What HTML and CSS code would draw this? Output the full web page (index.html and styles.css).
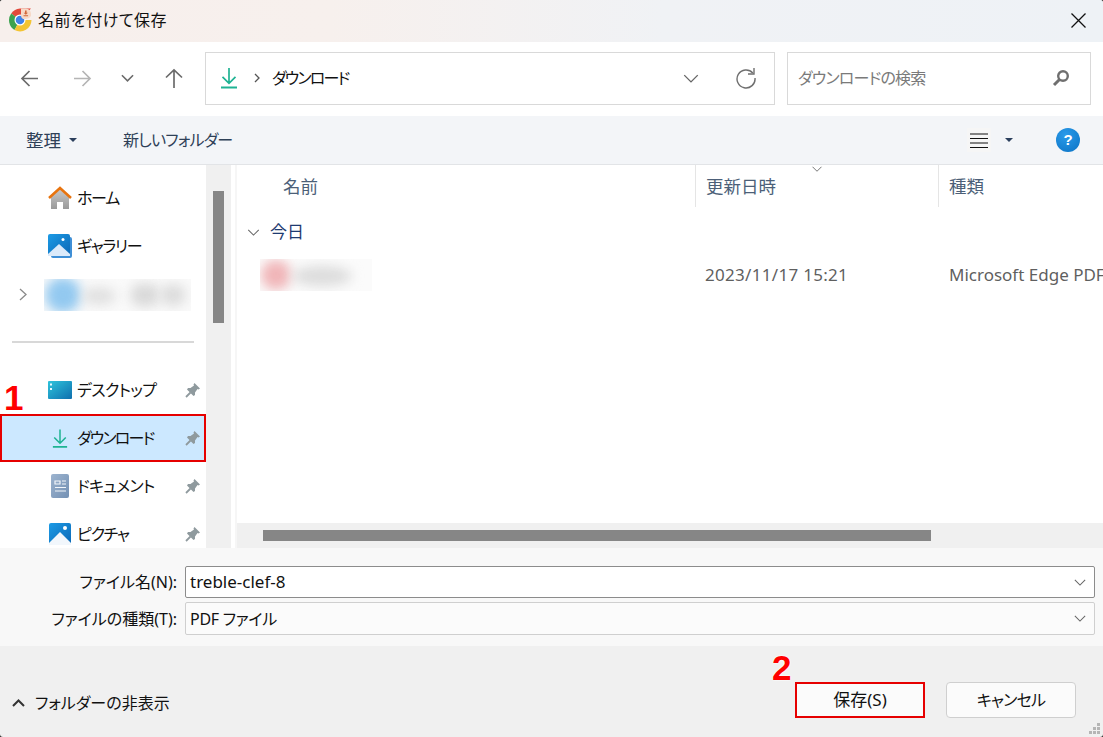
FILE: index.html
```html
<!DOCTYPE html>
<html lang="ja">
<head>
  <meta charset="utf-8">
  <title>名前を付けて保存</title>
  <link rel="stylesheet" href="styles.css">
</head>
<body>
  <svg class="defs" width="0" height="0">
    <defs>
      <linearGradient id="sky" x1="0" y1="0" x2="1" y2="1"><stop offset="0" stop-color="#1c9be6"/><stop offset="1" stop-color="#0b67b5"/></linearGradient>
      <linearGradient id="wall" x1="0" y1="0" x2="0" y2="1"><stop offset="0" stop-color="#c9c9c9"/><stop offset="1" stop-color="#9a9a9a"/></linearGradient>
      <linearGradient id="desk" x1="0" y1="0" x2="1" y2="1"><stop offset="0" stop-color="#2ec4dc"/><stop offset="1" stop-color="#0f6fae"/></linearGradient>
      <linearGradient id="doc" x1="0" y1="0" x2="1" y2="1"><stop offset="0" stop-color="#9db4cf"/><stop offset="1" stop-color="#7390b3"/></linearGradient>
      <symbol id="pin" viewBox="0 0 16 16"><path d="M9.500 1 15 6.500 13.500 7.500 12.500 7 10 10.500V13L8.500 14 2 7.500 3 6H5.500L9 3.500 8.500 2.500z" fill="#8f9a9e"/><path d="M5.500 10.500 1 15" stroke="#8f9a9e" stroke-width="1.800"/></symbol>
      <symbol id="down" viewBox="0 0 18 22"><path d="M9 1v15M2.500 9.800 9 16.300l6.500-6.500" fill="none" stroke="#1fb393" stroke-width="1.700"/><path d="M1 20.500h16" stroke="#1fb393" stroke-width="2"/></symbol>
      <symbol id="chev" viewBox="0 0 14 8"><path d="M1 1l6 6 6-6" fill="none" stroke="#666" stroke-width="1.200"/></symbol>
      <symbol id="caret" viewBox="0 0 8 4"><path d="M0 0h8L4 4z" fill="#2b3f5c"/></symbol>
    </defs>
  </svg>

  <div class="dialog">
    <header class="titlebar">
      <svg class="app-icon" width="24" height="24" viewBox="0 0 24 24">
        <path d="M12 12 3.200 5.500A11.500 11.500 0 0 1 12 .5h11z" fill="#e2493b"/>
        <path d="M12 12 6.500 22A11.500 11.500 0 0 1 3.200 5.500z" fill="#3ba24f"/>
        <path d="M12 12H23.500A11.500 11.500 0 0 1 6.500 22z" fill="#f3c433"/>
        <circle cx="12" cy="12" r="5.500" fill="#fff"/>
        <circle cx="12" cy="12" r="4.300" fill="#3f83e8"/>
        <path d="M13 .5h5a6 6 0 0 1 5 5V8a6 6 0 0 1-5 3h-3a5 5 0 0 1-2-3z" fill="#f6d9c8"/>
        <path d="M17 2.500h1.600v2.200h1.400l-2.200 2-2.200-2H17zM15.500 7.300h4.600v1h-4.600z" fill="#d2683a"/>
      </svg>
      <span class="title">名前を付けて保存</span>
      <svg class="close" width="15" height="15" viewBox="0 0 15 15"><path d="M.5.500l14 14M14.500.500l-14 14" stroke="#111" stroke-width="1.300"/></svg>
    </header>

    <nav class="navbar">
      <div class="nav-btns">
        <svg class="nav-back" width="18" height="17" viewBox="0 0 18 17"><path d="M18 8.500H2M9.500 1 2 8.500 9.500 16" fill="none" stroke="#6b6b6b" stroke-width="1.700"/></svg>
        <svg class="nav-fwd" width="18" height="17" viewBox="0 0 18 17"><path d="M0 8.500h16M8.500 1 16 8.500 8.500 16" fill="none" stroke="#b5b5b5" stroke-width="1.700"/></svg>
        <svg class="nav-drop" width="13" height="8" viewBox="0 0 14 8"><path d="M1 1l6 6 6-6" fill="none" stroke="#6b6b6b" stroke-width="1.700"/></svg>
        <svg class="nav-up" width="18" height="20" viewBox="0 0 18 20"><path d="M9 20V2M1 9.500 9 2l8 7.500" fill="none" stroke="#6b6b6b" stroke-width="1.700"/></svg>
      </div>
      <div class="address">
        <svg width="18" height="22"><use href="#down"/></svg>
        <svg class="crumb-sep" width="6" height="10" viewBox="0 0 6 10"><path d="M1 1l4 4-4 4" fill="none" stroke="#555" stroke-width="1.300"/></svg>
        <span class="crumb">ダウンロード</span>
        <svg class="addr-chev" width="16" height="9" viewBox="0 0 14 8"><use href="#chev"/></svg>
        <svg class="refresh" width="22" height="22" viewBox="0 0 22 22"><path d="M17.800 6A9 9 0 1 0 20 11" fill="none" stroke="#6f6f6f" stroke-width="1.400"/><path d="M19 1v6h-6" fill="none" stroke="#6f6f6f" stroke-width="1.400"/></svg>
      </div>
      <div class="search">
        <span class="search-text">ダウンロードの検索</span>
        <svg width="18" height="18" viewBox="0 0 18 18"><circle cx="11" cy="7" r="4.800" fill="none" stroke="#6f6f6f" stroke-width="2.400"/><path d="M7.500 10.500 2 16" stroke="#6f6f6f" stroke-width="3"/></svg>
      </div>
    </nav>

    <div class="toolbar">
      <button class="tool"><span class="organize">整理</span><svg class="tool-caret" width="8" height="4"><use href="#caret"/></svg></button>
      <button class="tool new-folder">新しいフォルダー</button>
      <div class="tool-right">
        <span class="view-btn"><svg width="18" height="15" viewBox="0 0 18 15"><path d="M0 1h18M0 5.500h18M0 10h18M0 14.500h18" stroke="#111" stroke-width="1"/></svg></span>
        <svg class="tool-caret view-caret" width="8" height="4"><use href="#caret"/></svg>
        <span class="help">?</span>
      </div>
    </div>

    <main class="main">
      <aside class="sidebar">
        <div class="side-item">
          <svg class="side-ic" width="24" height="24" viewBox="0 0 24 24"><path d="M3 11 12 3l9 8v12h-6v-7H9v7H3z" fill="url(#wall)"/><path d="M1 12 12 2l11 10" fill="none" stroke="#e8740f" stroke-width="2.600"/></svg>
          <span class="tight">ホーム</span>
        </div>
        <div class="side-item">
          <svg class="side-ic" width="24" height="24" viewBox="0 0 24 24"><rect x="3" y="3" width="21" height="21" rx="2" fill="#3f8fd6"/><rect width="22" height="22" rx="2" fill="url(#sky)"/><path d="M0 20 11 10l11 10v2H0z" fill="#dbeafa"/><circle cx="15" cy="5.500" r="1.500" fill="#fff"/></svg>
          <span class="tight">ギャラリー</span>
        </div>
        <div class="side-item">
          <svg class="expander" width="8" height="13" viewBox="0 0 8 13"><path d="M1 1l6 5.500L1 12" fill="none" stroke="#8a8a8a" stroke-width="1.300"/></svg>
          <div class="blur-box">
            <i class="blob side-blue"></i><i class="blob side-g1"></i><i class="blob side-g2"></i><i class="blob side-g3"></i>
          </div>
        </div>
        <div class="side-sep"><hr></div>
        <div class="side-item">
          <svg class="side-ic" width="24" height="18" viewBox="0 0 24 18"><rect width="24" height="18" rx="1" fill="url(#desk)"/><path d="M2 2.500h2v2H2zM2 7h2v2H2z" fill="#eafaff"/></svg>
          <span class="snug">デスクトップ</span>
          <svg class="pin" width="16" height="16"><use href="#pin"/></svg>
        </div>
        <div class="side-item selected">
          <svg class="side-ic dl" width="16" height="21" viewBox="0 0 18 22"><use href="#down"/></svg>
          <span class="tighter">ダウンロード</span>
          <svg class="pin" width="16" height="16"><use href="#pin"/></svg>
        </div>
        <div class="side-item">
          <svg class="side-ic" width="24" height="24" viewBox="0 0 24 24"><rect x="3" y="0" width="18" height="24" rx="2" fill="url(#doc)"/><path d="M7 7h5v3H7zM14 7h4M14 10h4M7 13.500h11M7 17h11" stroke="#f2f6fa" stroke-width="1.200" fill="none"/></svg>
          <span class="snug">ドキュメント</span>
          <svg class="pin" width="16" height="16"><use href="#pin"/></svg>
        </div>
        <div class="side-item">
          <svg class="side-ic pic" width="22" height="22" viewBox="0 0 22 22"><rect width="22" height="22" rx="2" fill="url(#sky)"/><path d="M0 20 11 9l11 11v2H0z" fill="#f2f7fc"/><circle cx="16" cy="5" r="2" fill="#fff"/></svg>
          <span class="tight">ピクチャ</span>
          <svg class="pin" width="16" height="16"><use href="#pin"/></svg>
        </div>
      </aside>
      <div class="side-scroll"><div class="side-thumb"></div></div>

      <section class="pane">
        <div class="list">
          <div class="col-heads">
            <div class="col-head first">名前</div>
            <div class="col-head">更新日時<svg class="sort" width="12" height="6" viewBox="0 0 14 8"><use href="#chev"/></svg></div>
            <div class="col-head last">種類</div>
          </div>
          <div class="group">
            <svg width="13" height="7" viewBox="0 0 14 8"><use href="#chev"/></svg>
            <span>今日</span>
          </div>
          <div class="file-row">
            <div class="file-blur"><i class="blob file-red"></i><i class="blob file-g"></i></div>
            <div class="file-date">2023/11/17 15:21</div>
            <div class="file-type">Microsoft Edge PDF</div>
          </div>
        </div>
        <div class="hscroll"><div class="hthumb"></div></div>
      </section>
    </main>

    <form class="form">
      <div class="form-row">
        <label>ファイル名(N):</label>
        <div class="field name"><span>treble-clef-8</span><svg width="12" height="7" viewBox="0 0 14 8"><use href="#chev"/></svg></div>
      </div>
      <div class="form-row">
        <label>ファイルの種類(T):</label>
        <div class="field type"><span>PDF ファイル</span><svg width="12" height="7" viewBox="0 0 14 8"><use href="#chev"/></svg></div>
      </div>
    </form>

    <footer class="footer">
      <div class="toggle">
        <svg width="13" height="8" viewBox="0 0 13 8"><path d="M1 7l5.500-5.500L12 7" fill="none" stroke="#333" stroke-width="2"/></svg>
        <span>フォルダーの非表示</span>
      </div>
      <div class="actions">
        <button class="btn save">保存(S)</button>
        <button class="btn cancel">キャンセル</button>
      </div>
      <svg class="grip" width="12" height="12" viewBox="0 0 12 12"><path d="M8 0h3v3H8zM4 4h3v3H4zM8 4h3v3H8zM0 8h3v3H0zM4 8h3v3H4zM8 8h3v3H8z" fill="#b5b5b5"/></svg>
    </footer>

    <span class="step step-one">1</span>
    <span class="step step-two">2</span>
  </div>
</body>
</html>
```

FILE: styles.css
```css
* { box-sizing: border-box; }
html, body { margin: 0; height: 100%; }
body { background: #2a2a2a; font-family: "Noto Sans", "Noto Sans CJK JP", sans-serif; font-size: 16px; line-height: 22px; color: #111; font-feature-settings: "palt"; overflow: hidden; }
button { font: inherit; color: inherit; font-feature-settings: inherit; }
.defs { position: absolute; }
.dialog { position: relative; width: 1103px; height: 737px; display: flex; flex-direction: column; border-radius: 3px; overflow: hidden; background: #f0f0f0; }
.snug { letter-spacing: -.7px; }
.tight { letter-spacing: -1.3px; }
.tighter { letter-spacing: -1.8px; }

/* title bar */
.titlebar { height: 42px; flex: none; display: flex; align-items: center; padding: 0 17px 2px 8px; background: linear-gradient(90deg, #f7efec 0%, #f7f0ed 30%, #f0f2f5 60%, #eef2f6 100%); }
.title { margin-left: 6px; letter-spacing: .5px; }
.close { margin-left: auto; }

/* navigation */
.navbar { height: 74px; flex: none; display: flex; align-items: center; background: #fff; padding: 0 12px 2px 0; }
.nav-btns { width: 205px; flex: none; display: flex; align-items: center; padding-left: 20px; }
.nav-fwd { margin-left: 36px; }
.nav-drop { margin-left: 29px; }
.nav-up { margin-left: 31px; }
.address, .search { height: 53px; border: 1px solid #d9d9d9; display: flex; align-items: center; }
.address { width: 570px; padding-left: 14px; }
.crumb-sep { margin: 0 0 0 16px; }
.crumb { margin-left: 12px; letter-spacing: -1.8px; }
.addr-chev { margin-left: auto; }
.refresh { margin: 0 17px 0 36px; }
.search { width: 304px; margin-left: 12px; padding: 0 20px 0 10px; justify-content: space-between; }
.search-text { color: #7a7a7a; letter-spacing: -.8px; }

/* toolbar */
.toolbar { height: 49px; flex: none; display: flex; align-items: center; background: #f3f5f8; border-bottom: 1px solid #e2e4e7; padding-left: 26px; color: #2e4057; }
.tool { border: 0; background: none; padding: 0; display: flex; align-items: center; }
.organize { font-size: 17.5px; }
.tool-caret { margin-left: 8px; }
.new-folder { margin-left: 46px; letter-spacing: -.8px; }
.tool-right { margin-left: auto; display: flex; align-items: center; padding-right: 23px; }
.view-btn { width: 24px; height: 24px; background: #f6f6f6; display: flex; align-items: center; justify-content: center; }
.view-caret { margin: 0 43px 0 14px; }
.help { width: 24px; height: 24px; border-radius: 50%; background: radial-gradient(circle at 40% 30%, #2a9bea, #0b72c4); color: #fff; font: bold 15px/24px "Liberation Sans", sans-serif; text-align: center; }

/* main area */
.main { height: 383px; flex: none; display: flex; background: #fff; }
.sidebar { width: 206px; flex: none; padding-top: 9px; overflow: hidden; }
.side-item { height: 48px; display: flex; align-items: center; padding-left: 48px; position: relative; }
.side-ic { flex: none; margin-right: 5px; }
.side-ic.dl { margin: 0 9px 0 4px; }
.side-ic.pic { margin: 0 6px 0 1px; }
.pin { margin-left: auto; margin-right: 5px; }
.selected { background: #cce8ff; border: 2px solid #e60000; padding-left: 46px; }
.selected .pin { margin-right: 3px; }
.side-sep { height: 48px; display: flex; align-items: center; padding: 0 12px; }
.side-sep hr { width: 100%; margin: 0; border: 0; border-top: 2px solid #d8d8d8; }
.expander { position: absolute; left: 19px; top: 18px; }
.blur-box { position: absolute; left: 44px; top: 9px; width: 147px; height: 32px; overflow: hidden; background: #fafafa; }
.blob { position: absolute; display: block; border-radius: 50%; filter: blur(6px); }
.side-blue { left: 1px; top: -2px; width: 36px; height: 36px; background: #93c9f0; }
.side-g1 { left: 38px; top: 8px; width: 34px; height: 18px; background: #e0e0e0; }
.side-g2 { left: 86px; top: 4px; width: 30px; height: 24px; background: #d9d9d9; }
.side-g3 { left: 116px; top: 5px; width: 26px; height: 22px; background: #dcdcdc; }
.side-scroll { width: 25px; flex: none; background: #f0f0f0; padding: 26px 7px 0; }
.side-thumb { width: 11px; height: 132px; background: #868686; }

.pane { flex: 1; min-width: 0; margin-left: 4px; border-left: 2px solid #f6f6f6; display: flex; flex-direction: column; }
.list { flex: 1; overflow: hidden; }
.col-heads { height: 42px; display: grid; grid-template-columns: 459px 243px 1fr; color: #4c5f78; font-size: 17.5px; }
.col-head { position: relative; padding: 10px 0 0 10px; border-right: 1px solid #e5e5e5; }
.col-head.first { padding-left: 46px; }
.col-head.last { border: 0; }
.sort { position: absolute; left: 115px; top: 1px; }
.group { height: 34px; margin-top: 8px; display: flex; align-items: center; padding-left: 10px; color: #1e3a70; font-size: 17px; }
.group span { margin-left: 10px; }
.file-row { height: 32px; margin-top: 10px; display: grid; grid-template-columns: 468px 244px 1fr; align-items: center; color: #5f5f5f; white-space: nowrap; font-size: 17px; }
.file-date { letter-spacing: .3px; }
.file-blur { position: relative; margin-left: 23px; width: 112px; height: 32px; overflow: hidden; background: #fbfbfb; }
.file-red { left: 1px; top: 1px; width: 30px; height: 30px; background: #f0b5b8; }
.file-g { left: 32px; top: 7px; width: 60px; height: 20px; background: #dcdcdc; }
.hscroll { height: 25px; flex: none; background: #f0f0f0; padding: 7px 0 0 26px; }
.hthumb { width: 668px; height: 11px; background: #868686; }

/* file name form */
.form { height: 98px; flex: none; background: #f8f8f8; padding-top: 18px; }
.form-row { display: flex; align-items: center; margin-bottom: 4px; }
.form-row label { width: 177px; text-align: right; }
.field { width: 910px; margin-left: 8px; display: flex; align-items: center; justify-content: space-between; padding: 0 8px 0 4px; border-radius: 2px; }
.field.name { height: 32px; background: #fff; border: 1px solid #8c8c8c; font-size: 17px; }
.field.type { height: 33px; background: #fbfbfb; border: 1px solid #cfcfcf; letter-spacing: -.3px; }

/* footer */
.footer { flex: 1; display: flex; align-items: center; justify-content: space-between; padding: 17px 27px 0 12px; position: relative; }
.toggle { display: flex; align-items: center; gap: 10px; margin-top: 6px; }
.actions { display: flex; gap: 21px; }
.btn { width: 130px; height: 36px; border: 1px solid #cfcfcf; border-radius: 4px; background: #fbfbfb; padding: 0; }
.save { width: 130px; border: 2px solid #e60000; border-radius: 0; font-size: 17px; }
.cancel { letter-spacing: -.8px; }
.grip { position: absolute; right: 2px; bottom: 2px; }

/* red step numbers */
.step { position: absolute; font: bold 35px/36px "Liberation Sans", sans-serif; color: #f00; text-shadow: 0 0 2px #fff, 0 0 2px #fff; }
.step-one { left: 4px; top: 380px; }
.step-two { left: 772px; top: 650px; }
```
